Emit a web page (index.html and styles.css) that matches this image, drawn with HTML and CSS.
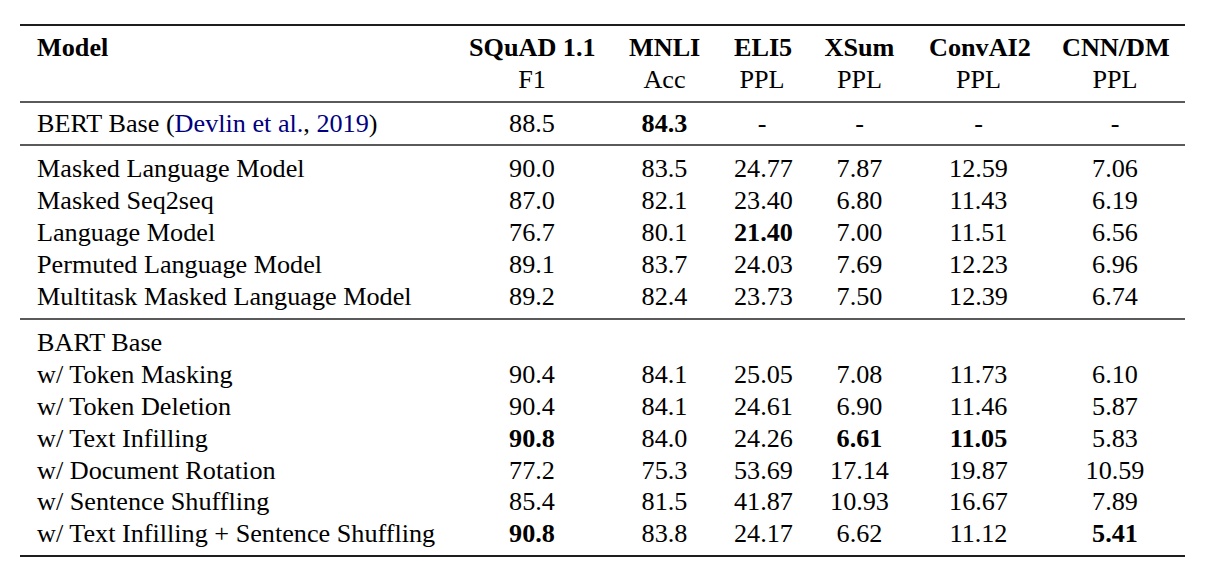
FILE: index.html
```html
<!DOCTYPE html>
<html lang="en">
<head>
<meta charset="utf-8">
<title>Pre-training objectives comparison</title>
<link rel="stylesheet" href="styles.css">
</head>
<body>
<table class="results">
  <colgroup>
    <col class="c-model">
    <col class="c-squad">
    <col class="c-mnli">
    <col class="c-eli5">
    <col class="c-xsum">
    <col class="c-conv">
    <col class="c-cnn">
  </colgroup>
  <thead>
    <tr class="head">
      <th class="name">Model<br>&nbsp;</th>
      <th>SQuAD 1.1<br><span class="metric">F1</span></th>
      <th>MNLI<br><span class="metric">Acc</span></th>
      <th>ELI5<br><span class="metric">PPL</span></th>
      <th>XSum<br><span class="metric">PPL</span></th>
      <th>ConvAI2<br><span class="metric">PPL</span></th>
      <th>CNN/DM<br><span class="metric">PPL</span></th>
    </tr>
  </thead>
  <tbody>
    <tr class="first single">
      <td class="name">BERT Base (<span class="cite">Devlin et al.</span>, <span class="cite">2019</span>)</td>
      <td>88.5</td><td class="best">84.3</td><td>-</td><td>-</td><td>-</td><td>-</td>
    </tr>
  </tbody>
  <tbody>
    <tr class="first">
      <td class="name">Masked Language Model</td>
      <td>90.0</td><td>83.5</td><td>24.77</td><td>7.87</td><td>12.59</td><td>7.06</td>
    </tr>
    <tr>
      <td class="name">Masked Seq2seq</td>
      <td>87.0</td><td>82.1</td><td>23.40</td><td>6.80</td><td>11.43</td><td>6.19</td>
    </tr>
    <tr>
      <td class="name">Language Model</td>
      <td>76.7</td><td>80.1</td><td class="best">21.40</td><td>7.00</td><td>11.51</td><td>6.56</td>
    </tr>
    <tr>
      <td class="name">Permuted Language Model</td>
      <td>89.1</td><td>83.7</td><td>24.03</td><td>7.69</td><td>12.23</td><td>6.96</td>
    </tr>
    <tr class="last">
      <td class="name">Multitask Masked Language Model</td>
      <td>89.2</td><td>82.4</td><td>23.73</td><td>7.50</td><td>12.39</td><td>6.74</td>
    </tr>
  </tbody>
  <tbody class="final">
    <tr class="first">
      <td class="name">BART Base</td>
      <td></td><td></td><td></td><td></td><td></td><td></td>
    </tr>
    <tr>
      <td class="name">w/ Token Masking</td>
      <td>90.4</td><td>84.1</td><td>25.05</td><td>7.08</td><td>11.73</td><td>6.10</td>
    </tr>
    <tr>
      <td class="name">w/ Token Deletion</td>
      <td>90.4</td><td>84.1</td><td>24.61</td><td>6.90</td><td>11.46</td><td>5.87</td>
    </tr>
    <tr>
      <td class="name">w/ Text Infilling</td>
      <td class="best">90.8</td><td>84.0</td><td>24.26</td><td class="best">6.61</td><td class="best">11.05</td><td>5.83</td>
    </tr>
    <tr>
      <td class="name">w/ Document Rotation</td>
      <td>77.2</td><td>75.3</td><td>53.69</td><td>17.14</td><td>19.87</td><td>10.59</td>
    </tr>
    <tr>
      <td class="name">w/ Sentence Shuffling</td>
      <td>85.4</td><td>81.5</td><td>41.87</td><td>10.93</td><td>16.67</td><td>7.89</td>
    </tr>
    <tr class="last">
      <td class="name">w/ Text Infilling + Sentence Shuffling</td>
      <td class="best">90.8</td><td>83.8</td><td>24.17</td><td>6.62</td><td>11.12</td><td class="best">5.41</td>
    </tr>
  </tbody>
</table>
</body>
</html>
```

FILE: styles.css
```css
html, body {
  margin: 0;
  padding: 0;
  background: #ffffff;
}

body {
  color: #000000;
  font-family: "Liberation Serif", "Times New Roman", serif;
}

.results {
  border-collapse: separate;
  border-spacing: 0;
  table-layout: fixed;
  width: 1165px;
  margin: 24px 0 0 20px;
  font-size: 26.2px;
  line-height: 31.8px;
}

.c-model { width: 432px; }
.c-squad { width: 160px; }
.c-mnli  { width: 105px; }
.c-eli5  { width: 90px; }
.c-xsum  { width: 105px; }
.c-conv  { width: 133px; }
.c-cnn   { width: 140px; }

.results th,
.results td {
  padding: 0 17px;
  text-align: center;
  vertical-align: top;
  white-space: nowrap;
}

.results .name {
  text-align: left;
}

.results th {
  font-weight: bold;
  border-top: 2px solid #1e1e1e;
  padding-top: 6px;
  padding-bottom: 5px;
}

.results .metric {
  font-weight: normal;
}

.results .first td {
  border-top: 2px solid #5a5a5a;
  padding-top: 7px;
}

.results .single td {
  padding-top: 5px;
  padding-bottom: 5px;
}

.results .last td {
  padding-bottom: 6px;
}

.results .final .last td {
  padding-bottom: 5px;
  border-bottom: 2px solid #1e1e1e;
}

.results .best {
  font-weight: bold;
}

.cite {
  color: #000080;
}
```
